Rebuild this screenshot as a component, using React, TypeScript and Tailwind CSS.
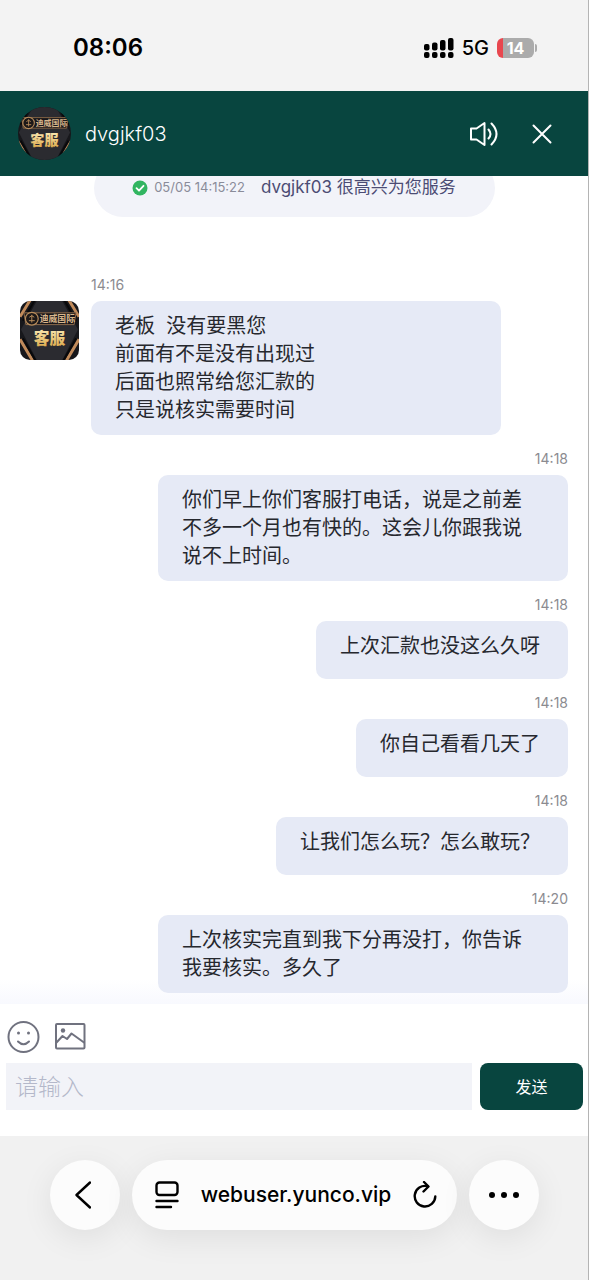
import * as React from 'react'
import { clsx } from 'clsx'

// =============================================================================
// DATA
// =============================================================================

interface Message {
  id: number
  from: 'agent' | 'user'
  time: string
  text: string
}

const MESSAGES: Message[] = [
  {
    id: 1,
    from: 'agent',
    time: '14:16',
    text: '老板  没有要黑您\n前面有不是没有出现过\n后面也照常给您汇款的\n只是说核实需要时间',
  },
  {
    id: 2,
    from: 'user',
    time: '14:18',
    text: '你们早上你们客服打电话，说是之前差不多一个月也有快的。这会儿你跟我说说不上时间。',
  },
  { id: 3, from: 'user', time: '14:18', text: '上次汇款也没这么久呀' },
  { id: 4, from: 'user', time: '14:18', text: '你自己看看几天了' },
  { id: 5, from: 'user', time: '14:18', text: '让我们怎么玩？怎么敢玩？' },
  { id: 6, from: 'user', time: '14:20', text: '上次核实完直到我下分再没打，你告诉我要核实。多久了' },
]

// =============================================================================
// AVATAR
// =============================================================================

/** Black and gold badge of the support agent */
function Avatar({ className }: { className?: string }) {
  const id = React.useId()
  return (
    <svg viewBox="0 0 60 60" className={clsx('shrink-0', className)} role="img" aria-label="客服">
      <defs>
        <linearGradient id={id} x1="0" y1="0" x2="0" y2="1">
          <stop offset="0" stopColor="#fff3c4" />
          <stop offset="1" stopColor="#d9a441" />
        </linearGradient>
      </defs>
      <rect width="60" height="60" fill="#17171b" />
      <path d="M17 0H43L59 29 43 60H17L1 29Z" fill="#2b2b30" />
      <path d="M11 -2L0 16M49 -2L60 16M0 39L13 61M60 39L47 61" stroke="#c08a5a" strokeWidth="3" />
      <path d="M15 -1L3 20M45 -1L57 20M3 38L16 61M57 38L44 61" stroke="#08080a" strokeWidth="2" />
      <path d="M4 12H57L55 24H6Z" fill="#19171a" stroke="#8c6a4a" strokeWidth="1" />
      <circle cx="12" cy="18" r="6.500" fill="#1c1818" stroke="#b98d5c" strokeWidth="1.2" />
      <path d="M12 14V22M9.5 16.5L12 15L14.500 16.500M9 20H15" stroke="#b98d5c" strokeWidth="1" fill="none" />
      <text x="20" y="21.500" fontSize="9" fontWeight="700" fill="#d8b68c" className="font-['Noto_Sans_CJK_SC',sans-serif]">
        迪威国际
      </text>
      <text x="30" y="43.500" fontSize="16" fontWeight="900" textAnchor="middle" fill={`url(#${id})`} className="font-['Noto_Sans_CJK_SC',sans-serif]">
        客服
      </text>
    </svg>
  )
}

// =============================================================================
// STATUS BAR
// =============================================================================

function StatusBar() {
  return (
    <div className="flex h-[91px] shrink-0 items-center justify-between bg-[#f3f3f3] pt-1 pr-[51px] pl-[73px] text-black">
      <span className="text-2xl font-semibold">08:06</span>
      <div className="flex items-center gap-2">
        <svg viewBox="0 0 30 20" className="h-5 w-[30px]" aria-hidden="true">
          <rect x="0" y="6" width="5.500" height="6.500" rx="2" />
          <rect x="8" y="4.500" width="5.500" height="8" rx="2" />
          <rect x="16" y="2" width="5.500" height="10.500" rx="2" />
          <rect x="24" y="0" width="5.500" height="12.500" rx="2" />
          <rect x="0" y="14" width="5.500" height="6" rx="2" />
          <rect x="8" y="14" width="5.500" height="6" rx="2" />
          <rect x="16" y="14" width="5.500" height="6" rx="2" />
          <rect x="24" y="14" width="5.500" height="6" rx="2" />
        </svg>
        <span className="text-xl font-medium">5G</span>
        <div className="flex items-center gap-px">
          <span className="flex h-5 w-[37px] items-center justify-center rounded-md bg-linear-to-r from-[#e8474f] from-15% to-[#ababab] to-15% text-base font-bold text-white">
            14
          </span>
          <span className="h-2 w-[2px] rounded-r-full bg-[#ababab]" />
        </div>
      </div>
    </div>
  )
}

// =============================================================================
// CHAT
// =============================================================================

function ChatHeader() {
  return (
    <header className="flex h-[85px] shrink-0 items-center bg-[#08453f] pr-[35px] pl-[18px] text-white">
      <Avatar className="size-[53px] rounded-full" />
      <h1 className="ml-[14px] flex-1 text-xl font-light">dvgjkf03</h1>
      <button type="button" aria-label="声音" className="mr-8">
        <svg viewBox="0 0 30 26" className="h-[26px] w-[30px]" fill="none" stroke="currentColor" strokeWidth="2" strokeLinecap="round" strokeLinejoin="round">
          <path d="M2 7.500H7.500L15.500 2V24L7.500 18.500H2Z" />
          <path d="M19.500 8.500Q23.500 13 19.500 17.500M22.500 2.500Q32.500 13 22.500 23.500" />
        </svg>
      </button>
      <button type="button" aria-label="关闭">
        <svg viewBox="0 0 22 22" className="size-[22px]" fill="none" stroke="currentColor" strokeWidth="2" strokeLinecap="round">
          <path d="M2.500 2.500L19.500 19.500M19.500 2.500L2.500 19.500" />
        </svg>
      </button>
    </header>
  )
}

function ServiceNotice() {
  return (
    <div className="mx-auto flex h-[58px] w-[401px] max-w-full shrink-0 items-center justify-center rounded-full bg-[#f2f3f9]">
      <svg viewBox="0 0 16 16" className="size-4" aria-hidden="true">
        <circle cx="8" cy="8" r="7.500" fill="#32b561" />
        <path d="M4.500 8.200L7 10.700L11.500 5.800" fill="none" stroke="#fff" strokeWidth="1.800" strokeLinecap="round" strokeLinejoin="round" />
      </svg>
      <time className="ml-[6px] text-[13px] text-[#8a8c99]">05/05 14:15:22</time>
      <span className="ml-4 text-[17px] text-[#4c4c74]">dvgjkf03 很高兴为您服务</span>
    </div>
  )
}

function ChatMessage({ message }: { message: Message }) {
  const isAgent = message.from === 'agent'
  return (
    <li className={clsx('flex w-full gap-3', !isAgent && 'justify-end')}>
      {isAgent && <Avatar className="mt-[26px] size-[59px] rounded-[10px]" />}
      <div className={clsx('flex w-[410px] flex-col gap-[6px]', !isAgent && 'items-end')}>
        <time className="text-sm leading-5 text-[#8b8b90]">{message.time}</time>
        <p
          className={clsx(
            'min-h-[58px] rounded-[10px] bg-[#e6eaf6] py-[11px] pr-7 pl-6 text-xl leading-7 whitespace-pre-wrap text-[#26282e]',
            isAgent && 'w-full',
          )}
        >
          {message.text}
        </p>
      </div>
    </li>
  )
}

function Composer() {
  return (
    <form className="shrink-0 bg-white pt-4 pr-[5px] pb-[26px] pl-[6px]" onSubmit={(e) => e.preventDefault()}>
      <div className="flex items-center gap-[14px] text-[#70727f]">
        <button type="button" aria-label="表情">
          <svg viewBox="0 0 34 34" className="size-[34px]" fill="none" stroke="currentColor" strokeWidth="2" strokeLinecap="round">
            <circle cx="17.500" cy="17" r="15" />
            <path d="M12 21.500Q17.500 27 23 21.500" />
            <circle cx="12.500" cy="13" r="1.500" fill="currentColor" stroke="none" />
            <circle cx="22.500" cy="13" r="1.500" fill="currentColor" stroke="none" />
          </svg>
        </button>
        <button type="button" aria-label="图片">
          <svg viewBox="0 0 32 28" className="h-7 w-8" fill="none" stroke="currentColor" strokeWidth="2" strokeLinecap="round" strokeLinejoin="round">
            <rect x="2" y="1" width="28.500" height="24.500" rx="1" />
            <path d="M2.500 19.500L8.500 13L13 16L17.500 10.500L30 19.500" />
            <circle cx="9" cy="7.500" r="2.200" fill="currentColor" stroke="none" />
          </svg>
        </button>
      </div>
      <div className="mt-[9px] flex gap-2">
        <input
          type="text"
          aria-label="请输入"
          placeholder="请输入"
          className="h-[47px] min-w-0 flex-1 bg-[#f2f3f8] px-[9px] text-[23px] font-light outline-none placeholder:text-[#b4b8ca]"
        />
        <button type="submit" className="w-[103px] rounded-lg bg-[#08453f] text-base text-white">
          发送
        </button>
      </div>
    </form>
  )
}

// =============================================================================
// BROWSER BAR
// =============================================================================

function BrowserBar() {
  return (
    <nav className="flex h-36 shrink-0 items-start gap-3 bg-[#f1f1f1] pt-6 pr-[49px] pl-[50px] text-black">
      <button type="button" aria-label="后退" className="flex size-[70px] shrink-0 items-center justify-center rounded-full bg-[#fcfcfc] shadow-[0_8px_32px_rgba(0,0,0,0.08)]">
        <svg viewBox="0 0 16 28" className="mr-1 h-7 w-4" fill="none" stroke="currentColor" strokeWidth="2.400" strokeLinecap="round" strokeLinejoin="round">
          <path d="M15 1.500L1.500 14L15 26.500" />
        </svg>
      </button>
      <div className="flex h-[70px] min-w-0 flex-1 items-center rounded-full bg-[#fcfcfc] pr-5 pl-[23px] shadow-[0_8px_32px_rgba(0,0,0,0.08)]">
        <button type="button" aria-label="页面设置">
          <svg viewBox="0 0 24 28" className="h-7 w-6" fill="none" stroke="currentColor" strokeWidth="2.400" strokeLinecap="round">
            <rect x="1.500" y="1.500" width="21" height="12.500" rx="3" />
            <path d="M1.500 20H22.500M1.500 26H16" />
          </svg>
        </button>
        <a href="#" className="flex-1 text-center text-[21px] font-medium">
          webuser.yunco.vip
        </a>
        <button type="button" aria-label="刷新">
          <svg viewBox="0 0 24 28" className="h-7 w-6" fill="none" stroke="currentColor" strokeWidth="2.400" strokeLinecap="round" strokeLinejoin="round">
            <path d="M14.500 5.200A10.300 10.300 0 1 0 22.300 15.500" />
            <path d="M11 1L15.500 5.500L10.500 10.500" />
          </svg>
        </button>
      </div>
      <button type="button" aria-label="更多" className="flex size-[70px] shrink-0 items-center justify-center gap-[6px] rounded-full bg-[#fcfcfc] shadow-[0_8px_32px_rgba(0,0,0,0.08)]">
        <span className="size-[6px] rounded-full bg-black" />
        <span className="size-[6px] rounded-full bg-black" />
        <span className="size-[6px] rounded-full bg-black" />
      </button>
    </nav>
  )
}

export default function App() {
  return (
    <div lang="zh-CN" className="flex h-dvh flex-col overflow-hidden border-r border-[#b4b4b4] bg-white font-['Inter','Noto_Sans_CJK_SC',sans-serif]">
      <StatusBar />
      <ChatHeader />
      {/* Newest message sits at the bottom, older ones slide under the header */}
      <main className="flex min-h-0 flex-1 flex-col justify-end overflow-hidden bg-linear-to-t from-[#f8f9fe] to-white to-3% pr-5 pb-[11px] pl-5">
        <ServiceNotice />
        <ul className="mt-[58px] flex shrink-0 flex-col gap-[14px]">
          {MESSAGES.map((message) => (
            <ChatMessage key={message.id} message={message} />
          ))}
        </ul>
      </main>
      <Composer />
      <BrowserBar />
    </div>
  )
}
